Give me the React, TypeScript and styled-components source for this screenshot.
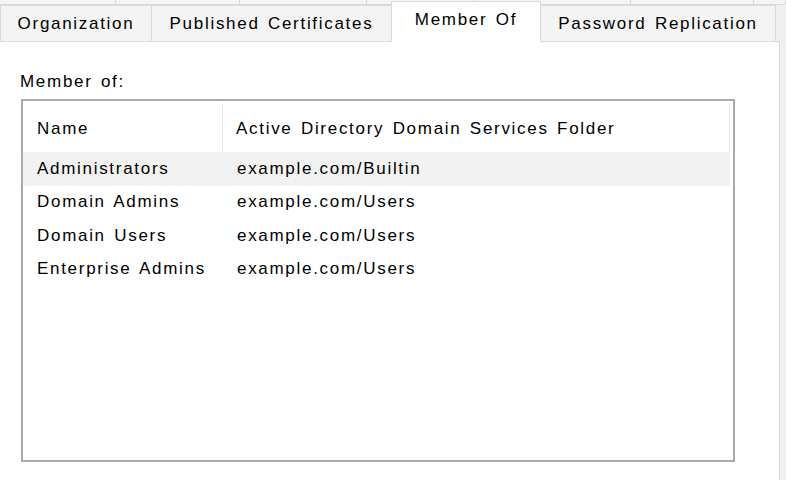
import React from "react";
import styled, { createGlobalStyle } from "styled-components";

const Global = createGlobalStyle`
  html, body { margin: 0; padding: 0; background: #f0f0f0; }
  * { box-sizing: border-box; }
`;

const Window = styled.div`
  width: 786px;
  height: 480px;
  overflow: hidden;
  display: flex;
  flex-direction: column;
  background: #f0f0f0;
  font-family: "Liberation Sans", Arial, sans-serif;
  font-size: 17px;
  letter-spacing: 1.7px;
  word-spacing: 2px;
  color: #000;
`;

const TopStrip = styled.div`
  height: 5px;
  display: flex;
  border-bottom: 1px solid #d9d9d9;
`;

const StripCell = styled.div<{ $w: number }>`
  width: ${(p) => p.$w}px;
  flex: none;
  background: #f4f4f4;
  border-right: 1px solid #d9d9d9;
`;

const TabRow = styled.div`
  height: 36px;
  display: flex;
  align-items: flex-end;
`;

const Tab = styled.div<{ $w: number; $active?: boolean; $first?: boolean }>`
  width: ${(p) => p.$w}px;
  flex: none;
  height: ${(p) => (p.$active ? 41 : 36)}px;
  margin-bottom: ${(p) => (p.$active ? -1 : 0)}px;
  margin-left: ${(p) => (p.$active ? -1 : 0)}px;
  position: relative;
  z-index: ${(p) => (p.$active ? 2 : 1)};
  display: flex;
  align-items: center;
  justify-content: center;
  padding-bottom: ${(p) => (p.$active ? 4 : 0)}px;
  background: ${(p) => (p.$active ? "#ffffff" : "#f4f4f4")};
  border: 1px solid #d9d9d9;
  border-bottom: none;
  border-left-width: ${(p) => (p.$active || p.$first ? 1 : 0)}px;
  white-space: nowrap;
`;

const Panel = styled.div`
  width: 780px;
  flex: 1;
  background: #ffffff;
  border-top: 1px solid #d9d9d9;
  border-right: 1px solid #d9d9d9;
  padding: 30px 0 0 20px;
  display: flex;
  flex-direction: column;
`;

const Label = styled.div`
  height: 20px;
  line-height: 20px;
  margin-bottom: 7px;
`;

const ListView = styled.div`
  margin-left: 1px;
  width: 714px;
  height: 363px;
  border: 2px solid #a8aab2;
  background: #fff;
  display: flex;
  flex-direction: column;
`;

const HeaderRow = styled.div`
  height: 51px;
  display: grid;
  grid-template-columns: 200px 507px;
`;

const HeaderCell = styled.div<{ $pad: number }>`
  margin: 2px 0 1px;
  padding-left: ${(p) => p.$pad}px;
  padding-top: 4px;
  display: flex;
  align-items: center;
  border-right: 1px solid #e5e5e5;
  white-space: nowrap;
`;

const Row = styled.div<{ $hot?: boolean }>`
  width: 707px;
  height: 33.5px;
  display: grid;
  grid-template-columns: 200px 507px;
  background: ${(p) => (p.$hot ? "#f2f2f2" : "transparent")};
`;

const Cell = styled.div<{ $pad: number }>`
  padding-left: ${(p) => p.$pad}px;
  display: flex;
  align-items: center;
  white-space: nowrap;
`;

const rows = [
  ["Administrators", "example.com/Builtin"],
  ["Domain Admins", "example.com/Users"],
  ["Domain Users", "example.com/Users"],
  ["Enterprise Admins", "example.com/Users"],
];

export default function App() {
  return (
    <>
      <Global />
      <Window>
        <TopStrip>
          {[116, 124, 127, 107, 157, 123, 32].map((w, i) => (
            <StripCell key={i} $w={w} />
          ))}
        </TopStrip>
        <TabRow>
          <Tab $w={152} $first>Organization</Tab>
          <Tab $w={240}>Published Certificates</Tab>
          <Tab $w={150} $active>Member Of</Tab>
          <Tab $w={235}>Password Replication</Tab>
        </TabRow>
        <Panel>
          <Label>Member of:</Label>
          <ListView>
            <HeaderRow>
              <HeaderCell $pad={14}>Name</HeaderCell>
              <HeaderCell $pad={13}>Active Directory Domain Services Folder</HeaderCell>
            </HeaderRow>
            {rows.map(([n, f], i) => (
              <Row key={n} $hot={i === 0}>
                <Cell $pad={14}>{n}</Cell>
                <Cell $pad={14}>{f}</Cell>
              </Row>
            ))}
          </ListView>
        </Panel>
      </Window>
    </>
  );
}
